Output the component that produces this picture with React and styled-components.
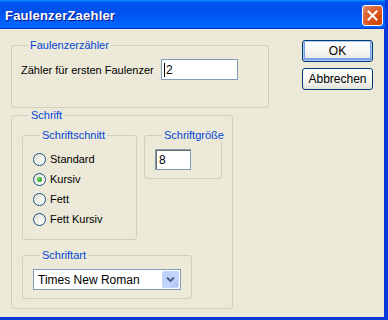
import React from 'react';
import styled, { createGlobalStyle } from 'styled-components';

const GlobalStyle = createGlobalStyle`
  html, body {
    margin: 0;
    padding: 0;
    background: #ece9d8;
  }
  body {
    font-family: "Liberation Sans", Arial, sans-serif;
    font-size: 11px;
    color: #000;
  }
`;

const Window = styled.div`
  width: 388px;
  height: 320px;
  box-sizing: border-box;
  display: flex;
  flex-direction: column;
  background: #ece9d8;
  border-right: 3px solid #0a3bd8;
  border-bottom: 2px solid #0a3bd8;
  box-shadow: inset -1px -1px 0 #0831d9;
  overflow: hidden;
`;

const TitleBar = styled.div`
  height: 29px;
  flex: 0 0 29px;
  display: flex;
  align-items: center;
  justify-content: space-between;
  padding: 2px 2px 0 5px;
  box-sizing: border-box;
  background: linear-gradient(
    to bottom,
    #0997ff 0%,
    #0053ee 8%,
    #0050ee 40%,
    #0066ff 88%,
    #0066ff 93%,
    #005bff 95%,
    #003dd7 96%,
    #003dd7 100%
  );
`;

const Title = styled.span`
  font-family: "Liberation Sans", Arial, sans-serif;
  font-weight: bold;
  font-size: 13px;
  color: #fff;
  text-shadow: 1px 1px #0f1089;
  letter-spacing: 0.2px;
`;

const CloseButton = styled.div`
  width: 21px;
  height: 21px;
  box-sizing: border-box;
  border: 1px solid #fff;
  border-radius: 3px;
  background: radial-gradient(circle at 90% 90%, #cc4600 0%, #dc5a25 55%, #d86a40 72%, #e9967a 100%);
  display: flex;
  align-items: center;
  justify-content: center;
`;

const Client = styled.div`
  flex: 1;
  display: flex;
  padding: 9px 0 0 11px;
`;

const LeftColumn = styled.div`
  display: flex;
  flex-direction: column;
  width: 258px;
`;

const Group = styled.fieldset`
  margin: ${p => p.$mt || 0}px 0 0 0;
  padding: ${p => p.$pt}px 0 ${p => p.$pb}px ${p => p.$pl || 10}px;
  width: ${p => p.$w}px;
  box-sizing: border-box;
  border: 1px solid #d0d0bf;
  border-radius: 3px;
  min-inline-size: 0;
`;

const Legend = styled.legend`
  color: #0046d5;
  padding: 0 2px;
  margin-left: 7px;
  line-height: 14px;
`;

const FieldRow = styled.div`
  display: flex;
  align-items: center;
  height: 21px;
`;

const Label = styled.span`
  width: 140px;
`;

const TextBox = styled.div`
  width: ${p => p.$w}px;
  height: 21px;
  box-sizing: border-box;
  border: 1px solid #7f9db9;
  background: #fff;
  display: flex;
  align-items: center;
  padding-left: 3px;
  font-size: 12px;
  box-shadow: ${p => (p.$inset ? 'inset 1px 1px 0 #716f64' : 'none')};
`;

const Caret = styled.span`
  display: inline-block;
  width: 1px;
  height: 14px;
  background: #000;
  margin-right: 1px;
  margin-left: -1px;
`;

const Row = styled.div`
  display: flex;
  align-items: flex-start;
  gap: 7px;
`;

const RadioList = styled.div`
  display: flex;
  flex-direction: column;
`;

const RadioRow = styled.div`
  height: 20px;
  display: flex;
  align-items: center;
  gap: 4px;
`;

const RadioCircle = styled.span`
  width: 13px;
  height: 13px;
  box-sizing: border-box;
  border-radius: 50%;
  border: 1px solid #1c5180;
  background: linear-gradient(135deg, #dcdcd7 0%, #f4f4f0 60%, #ffffff 100%);
  display: flex;
  align-items: center;
  justify-content: center;

  &::after {
    content: '';
    display: ${p => (p.$checked ? 'block' : 'none')};
    width: 5px;
    height: 5px;
    border-radius: 50%;
    background: radial-gradient(circle at 40% 40%, #6ddc6d 0%, #21a121 70%, #1a8a1a 100%);
  }
`;

const Select = styled.div`
  width: 148px;
  height: 21px;
  box-sizing: border-box;
  border: 1px solid #7f9db9;
  background: #fff;
  display: flex;
  align-items: center;
  justify-content: space-between;
  padding: 1px 1px 1px 4px;
  font-size: 12px;
`;

const DropButton = styled.div`
  width: 17px;
  height: 17px;
  box-sizing: border-box;
  border-radius: 2px;
  background: linear-gradient(135deg, #b6cdfc 0%, #c4d6fc 60%, #a8c0f6 100%);
  border: 1px solid #c6d6fb;
  display: flex;
  align-items: center;
  justify-content: center;
`;

const ButtonColumn = styled.div`
  display: flex;
  flex-direction: column;
  gap: 6px;
  margin-left: 33px;
  padding-top: 2px;
`;

const Button = styled.div`
  width: 71px;
  height: 22px;
  box-sizing: border-box;
  border: 1px solid #003c74;
  border-radius: 3px;
  background: linear-gradient(to bottom, #ffffff 0%, #f4f4f0 60%, #e3e2da 100%);
  display: flex;
  align-items: center;
  justify-content: center;
  font-size: 12px;
  box-shadow: ${p => (p.$default ? 'inset 0 0 0 1px #a6caf0, inset 0 -1px 0 2px #7b9ded' : 'none')};
`;

const styles = ['Standard', 'Kursiv', 'Fett', 'Fett Kursiv'];

const App = () => {
  return (
    <>
      <GlobalStyle />
      <Window>
        <TitleBar>
          <Title>FaulenzerZaehler</Title>
          <CloseButton>
            <svg width="11" height="11" viewBox="0 0 11 11">
              <path d="M1.5 1.5 L9.5 9.5 M9.5 1.5 L1.5 9.5" stroke="#fff" strokeWidth="2" strokeLinecap="square" />
            </svg>
          </CloseButton>
        </TitleBar>
        <Client>
          <LeftColumn>
            <Group $w={258} $pt={7} $pb={27} $pl={9}>
              <Legend>Faulenzerzähler</Legend>
              <FieldRow>
                <Label>Zähler für ersten Faulenzer</Label>
                <TextBox $w={77}>
                  <Caret />2
                </TextBox>
              </FieldRow>
            </Group>
            <Group $w={222} $pt={6} $pb={9}>
              <Legend>Schrift</Legend>
              <Row>
                <Group $w={115} $pt={7} $pb={10}>
                  <Legend>Schriftschnitt</Legend>
                  <RadioList>
                    {styles.map(s => (
                      <RadioRow key={s}>
                        <RadioCircle $checked={s === 'Kursiv'} />
                        {s}
                      </RadioRow>
                    ))}
                  </RadioList>
                </Group>
                <Group $w={78} $pt={7} $pb={8}>
                  <Legend>Schriftgröße</Legend>
                  <TextBox $w={36} $inset>8</TextBox>
                </Group>
              </Row>
              <Group $w={170} $pt={7} $pb={8} $mt={8}>
                <Legend>Schriftart</Legend>
                <Select>
                  Times New Roman
                  <DropButton>
                    <svg width="9" height="7" viewBox="0 0 9 7">
                      <path d="M1 1.5 L4.5 5 L8 1.5" stroke="#4d6185" strokeWidth="2" fill="none" />
                    </svg>
                  </DropButton>
                </Select>
              </Group>
            </Group>
          </LeftColumn>
          <ButtonColumn>
            <Button $default>OK</Button>
            <Button>Abbrechen</Button>
          </ButtonColumn>
        </Client>
      </Window>
    </>
  );
};

export default App;
